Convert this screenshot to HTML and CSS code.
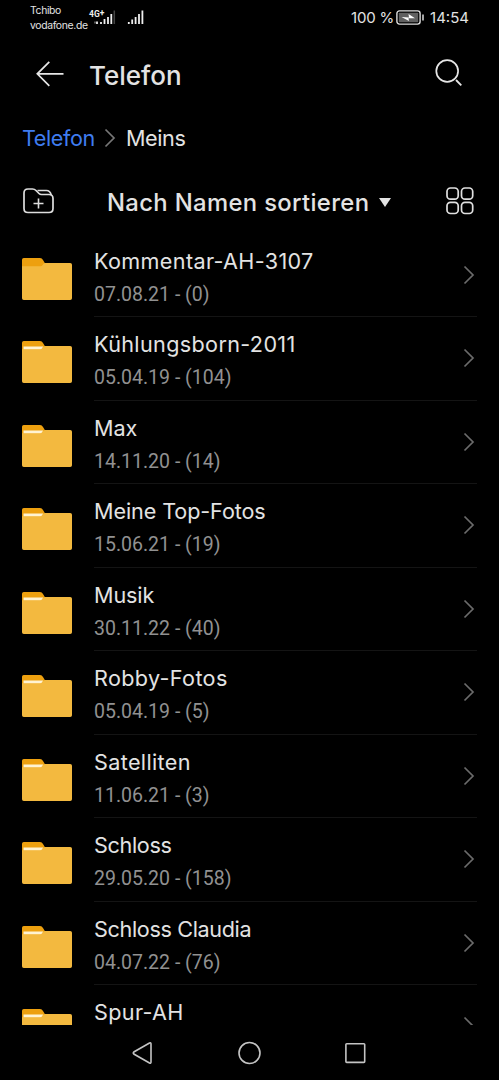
FILE: index.html
```
<!DOCTYPE html>
<html lang="de">
<head>
  <meta charset="UTF-8" />
  <meta name="viewport" content="width=device-width, initial-scale=1.0" />
  <title>Telefon</title>
  <link rel="stylesheet" href="styles.css">
</head>
<body>
  <svg class="defs" width="0" height="0">
    <symbol id="folder-empty" viewBox="0 0 50 42">
      <path d="M0 9V1.800Q0 0 1.800 0H18Q20 0 21 2L24 7V9Z" fill="#eda00f" />
      <path d="M0 8.300H18.500Q19.800 8.300 20.500 7.200L21.200 6.200Q22 5 23.500 5H48.200Q50 5 50 6.800V40.200Q50 42 48.200 42H1.800Q0 42 0 40.200Z" fill="#f3b93f" />
    </symbol>
    <symbol id="folder-full" viewBox="0 0 50 42">
      <path d="M0 9V1.800Q0 0 1.800 0H18Q20 0 21 2L24 7V9Z" fill="#eda00f" />
      <path d="M0 8.300H18.500L21 6Q22 5 23.500 5H48.200Q50 5 50 6.800V40.200Q50 42 48.200 42H1.800Q0 42 0 40.200Z" fill="#f3b93f" />
      <path d="M1.500 5.500H21.200Q20 8.200 18 8.200H1.500Z" fill="#fff3d2" />
    </symbol>
    <symbol id="chevron" viewBox="0 0 12 20">
      <path d="M1.500 1.500L10 10L1.500 18.500" fill="none" stroke="currentColor" stroke-width="1.700" />
    </symbol>
  </svg>

  <div class="status-bar">
    <div class="carrier">Tchibo<br>vodafone.de</div>
    <svg class="signal" width="58" height="18" viewBox="0 0 58 18">
      <text class="net" x="0" y="7">4G<tspan dy="-1">+</tspan></text>
      <path d="M8 14V11.500M12 14V12M15.500 14V9M19 14V7M22.300 14V4M39.800 14V12M43.200 14V9.500M46.600 14V7M50 14V4M53.400 14V0.500" stroke="#eee" stroke-width="1.800" />
      <path d="M5 12.500H7" stroke="#555" stroke-width="2" />
      <path d="M25.300 14V0.500" stroke="#444" stroke-width="1.500" />
    </svg>
    <div class="status-right">
      <span class="percent">100 %</span>
      <svg class="battery" width="28" height="16" viewBox="0 0 28 16">
        <rect x="0.900" y="0.900" width="23.200" height="13.200" rx="2.500" fill="none" stroke="#ddd" stroke-width="1.400" />
        <rect x="2.800" y="2.800" width="19.400" height="9.400" rx="0.500" fill="#606060" />
        <path d="M5.500 7L13 7.500L12.500 4L19 8.300L12.500 8.300L13 11Z" fill="#fff" />
        <path d="M27 4.500V10.500" stroke="#ddd" stroke-width="1.500" />
      </svg>
      <span class="clock">14:54</span>
    </div>
  </div>

  <header class="title-bar">
    <svg class="back" width="28" height="26" viewBox="0 0 28 26">
      <path d="M13.300 0.800L1.300 12.800L13.300 24.800M1.300 12.800H27.500" fill="none" stroke="#e6e6e6" stroke-width="1.700" />
    </svg>
    <h1>Telefon</h1>
    <svg class="search" width="28" height="28" viewBox="0 0 28 28">
      <circle cx="12.200" cy="12" r="10.900" fill="none" stroke="#e6e6e6" stroke-width="1.700" />
      <path d="M21 21L26.300 26.300" stroke="#e6e6e6" stroke-width="1.800" />
    </svg>
  </header>

  <nav class="breadcrumb">
    <a class="crumb-link">Telefon</a>
    <svg class="crumb-arrow" width="12" height="20"><use href="#chevron" /></svg>
    <span class="crumb-current">Meins</span>
  </nav>

  <div class="toolbar">
    <svg class="new-folder" width="32" height="26" viewBox="0 0 32 26">
      <path d="M1 5Q1 1 5 1H9.500Q11.500 1 13 2.500L16 5.500Q17 6.500 18.500 6.500H26Q30 6.500 30 10.500V20.500Q30 24.500 26 24.500H5Q1 24.500 1 20.500Z" fill="none" stroke="#ddd" stroke-width="1.700" />
      <path d="M14.500 2.500H23.500Q27 2.500 28.300 7M15.500 10.500V20.500M10.500 15.500H20.500" fill="none" stroke="#ddd" stroke-width="1.600" />
    </svg>
    <div class="sort"><span>Nach Namen sortieren</span><i class="caret"></i></div>
    <svg class="grid" width="28" height="28" viewBox="0 0 28 28" fill="none" stroke="#e0e0e0" stroke-width="1.700">
      <rect x="1" y="1" width="11.200" height="11.200" rx="3.500" />
      <rect x="15.500" y="1" width="11.200" height="11.200" rx="3.500" />
      <rect x="1" y="15.300" width="11.200" height="11.200" rx="3.500" />
      <rect x="15.500" y="15.300" width="11.200" height="11.200" rx="3.500" />
    </svg>
  </div>

  <ul class="list">
    <li class="item">
      <svg class="folder"><use href="#folder-empty" /></svg>
      <div class="info"><div class="text"><div class="name wide">Kommentar-AH-3107</div><div class="meta">07.08.21 - (0)</div></div><svg class="arrow"><use href="#chevron" /></svg></div>
    </li>
    <li class="item">
      <svg class="folder"><use href="#folder-full" /></svg>
      <div class="info"><div class="text"><div class="name wide">Kühlungsborn-2011</div><div class="meta">05.04.19 - (104)</div></div><svg class="arrow"><use href="#chevron" /></svg></div>
    </li>
    <li class="item">
      <svg class="folder"><use href="#folder-full" /></svg>
      <div class="info"><div class="text"><div class="name">Max</div><div class="meta">14.11.20 - (14)</div></div><svg class="arrow"><use href="#chevron" /></svg></div>
    </li>
    <li class="item">
      <svg class="folder"><use href="#folder-full" /></svg>
      <div class="info"><div class="text"><div class="name">Meine Top-Fotos</div><div class="meta">15.06.21 - (19)</div></div><svg class="arrow"><use href="#chevron" /></svg></div>
    </li>
    <li class="item">
      <svg class="folder"><use href="#folder-full" /></svg>
      <div class="info"><div class="text"><div class="name">Musik</div><div class="meta">30.11.22 - (40)</div></div><svg class="arrow"><use href="#chevron" /></svg></div>
    </li>
    <li class="item">
      <svg class="folder"><use href="#folder-full" /></svg>
      <div class="info"><div class="text"><div class="name wide">Robby-Fotos</div><div class="meta">05.04.19 - (5)</div></div><svg class="arrow"><use href="#chevron" /></svg></div>
    </li>
    <li class="item">
      <svg class="folder"><use href="#folder-full" /></svg>
      <div class="info"><div class="text"><div class="name wide">Satelliten</div><div class="meta">11.06.21 - (3)</div></div><svg class="arrow"><use href="#chevron" /></svg></div>
    </li>
    <li class="item">
      <svg class="folder"><use href="#folder-full" /></svg>
      <div class="info"><div class="text"><div class="name tight">Schloss</div><div class="meta">29.05.20 - (158)</div></div><svg class="arrow"><use href="#chevron" /></svg></div>
    </li>
    <li class="item">
      <svg class="folder"><use href="#folder-full" /></svg>
      <div class="info"><div class="text"><div class="name tight">Schloss Claudia</div><div class="meta">04.07.22 - (76)</div></div><svg class="arrow"><use href="#chevron" /></svg></div>
    </li>
    <li class="item">
      <svg class="folder"><use href="#folder-full" /></svg>
      <div class="info"><div class="text"><div class="name wide">Spur-AH</div></div><svg class="arrow"><use href="#chevron" /></svg></div>
    </li>
  </ul>

  <div class="nav-bar">
    <svg width="22" height="24" viewBox="0 0 22 24"><path d="M1.800 11Q0.800 12 1.800 13L17.500 22Q19 22.700 19 21V3Q19 1.300 17.500 2Z" fill="none" stroke="#c4c4c4" stroke-width="1.600" /></svg>
    <svg width="24" height="24" viewBox="0 0 24 24"><circle cx="11.500" cy="12" r="10.500" fill="none" stroke="#c4c4c4" stroke-width="1.600" /></svg>
    <svg width="22" height="24" viewBox="0 0 22 24"><rect x="0.900" y="2.800" width="18.800" height="18.600" rx="0.800" fill="none" stroke="#c4c4c4" stroke-width="1.600" /></svg>
  </div>
</body>
</html>
```
FILE: styles.css
```
* {
  box-sizing: border-box;
}
body {
  margin: 0;
  height: 1080px;
  overflow: hidden;
  display: flex;
  flex-direction: column;
  background: #000;
  color: #e3e3e3;
  font-family: Inter, "Liberation Sans", sans-serif;
}
svg {
  display: block;
  flex: none;
}
.defs {
  position: absolute;
}
.status-bar {
  display: flex;
  height: 40px;
  padding: 0 30px;
}
.carrier {
  width: 59px;
  padding-top: 4px;
  font-size: 10.4px;
  line-height: 14.5px;
  letter-spacing: -0.35px;
  white-space: nowrap;
}
.signal {
  margin-top: 10px;
  overflow: visible;
}
.net {
  font: bold 8.500px Roboto, sans-serif;
  fill: #eee;
}
.status-right {
  display: flex;
  margin-left: auto;
  padding-top: 8px;
  font-size: 15px;
  line-height: 20px;
}
.percent {
  letter-spacing: -0.2px;
}
.battery {
  margin: 2px 6px 0 2px;
}
.title-bar {
  display: flex;
  align-items: center;
  height: 70px;
  padding: 0 36px;
}
.back {
  margin-bottom: 3px;
}
.search {
  margin-bottom: 4px;
}
h1 {
  margin: 0 auto 0 25px;
  font-size: 26px;
  font-weight: 500;
}
.breadcrumb {
  display: flex;
  align-items: center;
  height: 56px;
  padding: 0 22px;
  font-size: 21.6px;
  letter-spacing: -0.4px;
}
.crumb-link {
  color: #3f7df0;
}
.crumb-arrow {
  margin: 0 10px 1px 9px;
  color: #777;
}
.toolbar {
  display: flex;
  align-items: center;
  height: 67.5px;
  padding: 5px 25px 0 23px;
}
.new-folder,
.grid {
  margin-bottom: 2px;
}
.sort {
  display: flex;
  align-items: center;
  margin: 0 auto 0 52px;
  font-size: 23.8px;
  font-weight: 500;
  letter-spacing: 0.36px;
}
.caret {
  margin-left: 10px;
  border: 6px solid transparent;
  border-top: 9px solid #e3e3e3;
  border-bottom: 0;
}
.list {
  flex: 1;
  margin: 0;
  padding: 0 22px;
  overflow: hidden;
  list-style: none;
}
.item {
  display: flex;
  height: 83.55px;
}
.folder {
  width: 50px;
  height: 42px;
  margin: 24px 22px 0 0;
}
.info {
  flex: 1;
  display: flex;
  justify-content: space-between;
  border-bottom: 1px solid #141414;
}
.name {
  margin-top: 12px;
  font-size: 21.6px;
  line-height: 30px;
  letter-spacing: -0.1px;
}
.wide {
  letter-spacing: 0.35px;
}
.tight {
  letter-spacing: -0.35px;
}
.meta {
  margin-top: 6px;
  font-family: Roboto, "Liberation Sans", sans-serif;
  font-size: 19.5px;
  line-height: 26px;
  color: #919191;
}
.arrow {
  width: 12px;
  height: 20px;
  margin: 31px 2px 0 0;
  color: #6b6b6b;
}
.nav-bar {
  display: flex;
  justify-content: space-between;
  height: 55px;
  padding: 16px 132px 0 132px;
}
```
